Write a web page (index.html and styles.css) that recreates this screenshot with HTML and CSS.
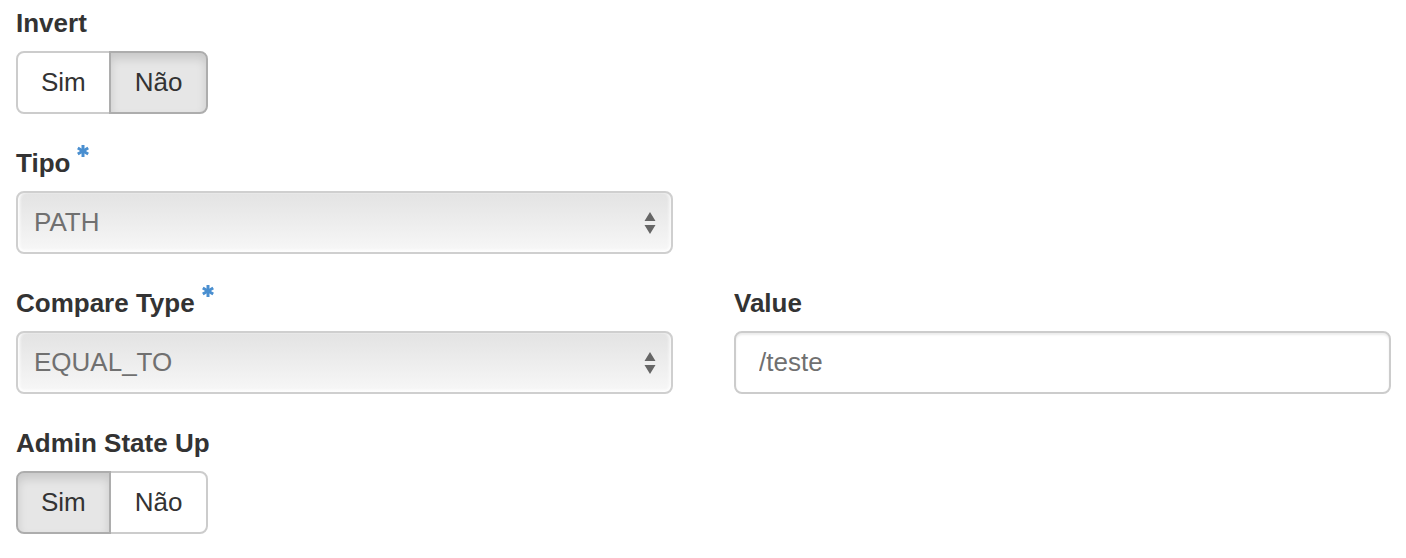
FILE: index.html
```html
<!DOCTYPE html>
<html lang="pt">
<head>
<meta charset="utf-8">
<title>Rule</title>
<link rel="stylesheet" href="styles.css">
</head>
<body>
<form class="form">
  <div class="group">
    <label class="label">Invert</label>
    <div class="btn-group">
      <span class="btn">Sim</span>
      <span class="btn active">Não</span>
    </div>
  </div>

  <div class="group">
    <label class="label">Tipo<svg class="req" viewBox="0 0 12 12" width="12" height="12"><g stroke="#4a8fd0" stroke-width="3"><line x1="6" y1="0" x2="6" y2="12"/><line x1="0.8" y1="3" x2="11.2" y2="9"/><line x1="0.8" y1="9" x2="11.2" y2="3"/></g></svg></label>
    <div class="row">
      <div class="select"><span>PATH</span><svg class="arrows" viewBox="0 0 12 24" width="12" height="24"><path d="M6 1 L11.5 10 L0.5 10 Z M6 23 L11.5 14 L0.5 14 Z" fill="#666"/></svg></div>
    </div>
  </div>

  <div class="group">
    <div class="row">
      <div class="col">
        <label class="label">Compare Type<svg class="req" viewBox="0 0 12 12" width="12" height="12"><g stroke="#4a8fd0" stroke-width="3"><line x1="6" y1="0" x2="6" y2="12"/><line x1="0.8" y1="3" x2="11.2" y2="9"/><line x1="0.8" y1="9" x2="11.2" y2="3"/></g></svg></label>
        <div class="select"><span>EQUAL_TO</span><svg class="arrows" viewBox="0 0 12 24" width="12" height="24"><path d="M6 1 L11.5 10 L0.5 10 Z M6 23 L11.5 14 L0.5 14 Z" fill="#666"/></svg></div>
      </div>
      <div class="col">
        <label class="label">Value</label>
        <input class="input" type="text" value="/teste">
      </div>
    </div>
  </div>

  <div class="group">
    <label class="label">Admin State Up</label>
    <div class="btn-group">
      <span class="btn active">Sim</span>
      <span class="btn">Não</span>
    </div>
  </div>
</form>
</body>
</html>
```

FILE: styles.css
```css
* { box-sizing: border-box; }

html, body {
  margin: 0;
  padding: 0;
  background: #fff;
}

body {
  font-family: "Liberation Sans", Arial, Helvetica, sans-serif;
  font-size: 26px;
  line-height: 37px;
  color: #333;
}

.form {
  padding: 5px 15px 0 16px;
  display: flex;
  flex-direction: column;
  gap: 31px;
}

.group {
  display: flex;
  flex-direction: column;
}

.label {
  display: block;
  font-weight: bold;
  color: #333;
  margin-bottom: 9px;
  white-space: nowrap;
}

.req {
  display: inline-block;
  vertical-align: text-top;
  margin-top: -3px;
  margin-left: 7px;
}

.row {
  display: grid;
  grid-template-columns: 657px 657px;
  column-gap: 61px;
}

.col {
  display: flex;
  flex-direction: column;
}

.btn-group {
  display: flex;
}

.btn {
  display: flex;
  align-items: center;
  justify-content: center;
  height: 63px;
  padding: 0 23px;
  border: 2px solid #ccc;
  background: #fff;
  color: #333;
  font-size: 26px;
}

.btn:first-child {
  border-radius: 8px 0 0 8px;
}

.btn + .btn {
  margin-left: -2px;
  padding: 0 24px;
  border-radius: 0 8px 8px 0;
}

.btn.active {
  background: #e6e6e6;
  border-color: #adadad;
  box-shadow: inset 0 6px 10px rgba(0, 0, 0, 0.125);
  position: relative;
}

.select {
  display: flex;
  align-items: center;
  justify-content: space-between;
  height: 63px;
  padding: 0 15px 0 16px;
  border: 2px solid #cfcfcf;
  border-radius: 8px;
  background: linear-gradient(to bottom, #e3e3e3 0%, #ececec 45%, #f7f7f7 100%);
  box-shadow: inset 3px 0 3px -1px rgba(255, 255, 255, 0.9), inset 0 -3px 3px -1px rgba(255, 255, 255, 0.9), inset -3px 0 3px -1px rgba(255, 255, 255, 0.7);
  color: #707070;
  font-size: 26px;
}

.arrows {
  display: block;
}

.input {
  display: block;
  width: 100%;
  height: 63px;
  padding: 0 23px;
  border: 2px solid #ccc;
  border-radius: 8px;
  background: #fff;
  box-shadow: inset 0 2px 2px rgba(0, 0, 0, 0.075);
  font-family: "Liberation Sans", Arial, Helvetica, sans-serif;
  font-size: 26px;
  color: #707070;
  outline: none;
}
```
